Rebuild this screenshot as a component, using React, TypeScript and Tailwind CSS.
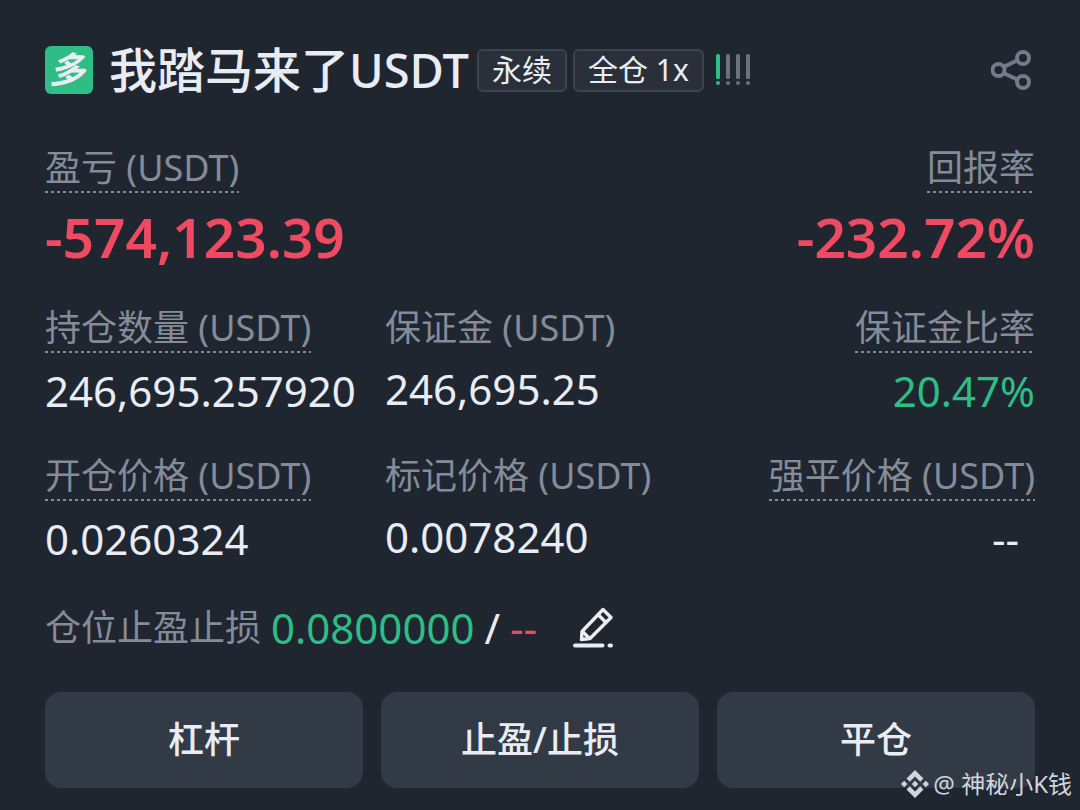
// Futures position card: header, PnL, position stats, TP/SL line and actions.

import React from "react";
import clsx from "clsx";

type Tone = "default" | "green";

type Stat = {
  label: string;
  value: string;
  underlined?: boolean;
  alignRight?: boolean;
  tone?: Tone;
};

const STATS: Stat[] = [
  { label: "持仓数量 (USDT)", value: "246,695.257920", underlined: true },
  { label: "保证金 (USDT)", value: "246,695.25" },
  { label: "保证金比率", value: "20.47%", underlined: true, alignRight: true, tone: "green" },
  { label: "开仓价格 (USDT)", value: "0.0260324", underlined: true },
  { label: "标记价格 (USDT)", value: "0.0078240" },
  { label: "强平价格 (USDT)", value: "--", underlined: true, alignRight: true },
];

const ACTIONS = ["杠杆", "止盈/止损", "平仓"];

function Label({ children, underlined }: { children: React.ReactNode; underlined?: boolean }) {
  return (
    <dt
      className={clsx(
        "w-fit whitespace-nowrap text-[36px] leading-[46px] text-[#858b98]",
        underlined
          ? "h-12 bg-[repeating-linear-gradient(90deg,#858b98_0_3px,transparent_3px_6px)] bg-[length:100%_2px] bg-bottom bg-no-repeat"
          : "h-[46px]",
      )}
    >
      {children}
    </dt>
  );
}

function Tag({ children }: { children: React.ReactNode }) {
  return (
    <span className="flex h-[43px] items-center whitespace-nowrap rounded-md border-2 border-[#3d4450] bg-[#29303a] px-[13px] text-[30px] leading-none text-[#eaecf4]">
      {children}
    </span>
  );
}

// Auto-deleveraging queue: one lit bar out of four.
function RiskBars() {
  return (
    <svg width="36" height="32" viewBox="0 0 36 32" className="ml-1.5" aria-label="ADL 1/4">
      {[0, 1, 2, 3].map((i) => (
        <g key={i} fill={i === 0 ? "#2ebd85" : "#6b717d"}>
          <rect x={i * 10} y="0" width="4" height="25" rx="1.5" />
          <circle cx={i * 10 + 2} cy="29" r="2" />
        </g>
      ))}
    </svg>
  );
}

function ShareIcon() {
  return (
    <svg width="44" height="42" viewBox="0 0 44 42" fill="none" stroke="#747a87" strokeWidth="4">
      <circle cx="7.5" cy="21" r="6" />
      <circle cx="32" cy="9" r="6" />
      <circle cx="32" cy="33" r="6" />
      <path d="M12.5 18 27 11M12.5 24 27 31" />
    </svg>
  );
}

function EditIcon() {
  return (
    <svg
      width="40"
      height="42"
      viewBox="0 0 40 42"
      fill="none"
      stroke="#eaecf4"
      strokeWidth="3.4"
      strokeLinejoin="round"
    >
      <path d="M8.5 32.5 9 24.5 30 2.5 38 10.5 17 31.5Z" />
      <path d="M25 7.5l8 8M9.5 24.5l7 7" />
      <path d="M2 38.5h27.5M36.5 38.5h1.5" strokeWidth="4" strokeLinecap="round" />
    </svg>
  );
}

function Watermark() {
  return (
    <div className="absolute right-2 bottom-2 flex items-center text-[24px] leading-9 text-[#d0d4dc]">
      <svg width="28" height="28" viewBox="0 0 28 28" fill="currentColor" className="mr-1">
        <path d="M14 0 22.5 8.5 19.2 11.8 14 6.6 8.8 11.8 5.5 8.5Z" />
        <path d="M14 28 22.5 19.5 19.2 16.2 14 21.4 8.8 16.2 5.5 19.5Z" />
        <path d="M3.2 10.8 6.4 14 3.2 17.2 0 14ZM24.8 10.8 28 14 24.8 17.2 21.6 14ZM14 10.8 17.2 14 14 17.2 10.8 14Z" />
      </svg>
      <span>@ 神秘小K钱</span>
    </div>
  );
}

export default function App() {
  return (
    <main
      lang="zh-CN"
      className="relative min-h-screen bg-[#1f2630] px-[45px] pt-[46px] pb-[22px] font-['Noto_Sans','Noto_Sans_CJK_SC',sans-serif] text-[#eaecf4]"
    >
      <header className="flex h-12 items-center">
        <span className="flex size-12 items-center justify-center rounded-md bg-[#2ebd85] pr-1 text-[36px] leading-none font-bold italic">
          多
        </span>
        <h1 className="ml-4 whitespace-nowrap text-[48px] leading-[48px] font-medium">
          我踏马来了<span className="text-[47px]">USDT</span>
        </h1>
        <div className="ml-2 flex items-center gap-1.5">
          <Tag>永续</Tag>
          <Tag>全仓 1x</Tag>
          <RiskBars />
        </div>
        <button aria-label="分享" className="ml-auto">
          <ShareIcon />
        </button>
      </header>

      <dl className="mt-[51px] flex justify-between">
        <div>
          <Label underlined>盈亏 (USDT)</Label>
          <dd className="mt-3 text-[55px] leading-[64px] font-semibold text-[#f04a62]">-574,123.39</dd>
        </div>
        <div className="flex flex-col items-end">
          <Label underlined>回报率</Label>
          <dd className="mt-3 text-[55px] leading-[64px] font-semibold text-[#f04a62]">-232.72%</dd>
        </div>
      </dl>

      <dl className="mt-9 grid grid-cols-[34fr_33fr_32fr] gap-y-[38px]">
        {STATS.map((s) => (
          <div key={s.label} className={clsx("flex flex-col", s.alignRight && "items-end")}>
            <Label underlined={s.underlined}>{s.label}</Label>
            <dd
              className={clsx(
                "mt-3.5 text-[42px] leading-[48px]",
                s.tone === "green" && "text-[#2ebd85]",
                s.value === "--" && "pr-4",
              )}
            >
              {s.value}
            </dd>
          </div>
        ))}
      </dl>

      <div className="mt-[41px] flex h-12 items-center whitespace-nowrap text-[42px] leading-[48px]">
        <span className="text-[36px] text-[#858b98]">仓位止盈止损</span>
        <span className="ml-2.5 text-[#2ebd85]">0.0800000</span>
        <span className="mx-2.5">/</span>
        <span className="text-[#f04a62]">--</span>
        <button aria-label="编辑止盈止损" className="ml-9">
          <EditIcon />
        </button>
      </div>

      <div className="mt-10 grid grid-cols-3 gap-[18px]">
        {ACTIONS.map((label) => (
          <button
            key={label}
            className="h-24 rounded-2xl bg-[#323b45] text-[36px] leading-none font-medium"
          >
            {label}
          </button>
        ))}
      </div>

      <Watermark />
    </main>
  );
}
